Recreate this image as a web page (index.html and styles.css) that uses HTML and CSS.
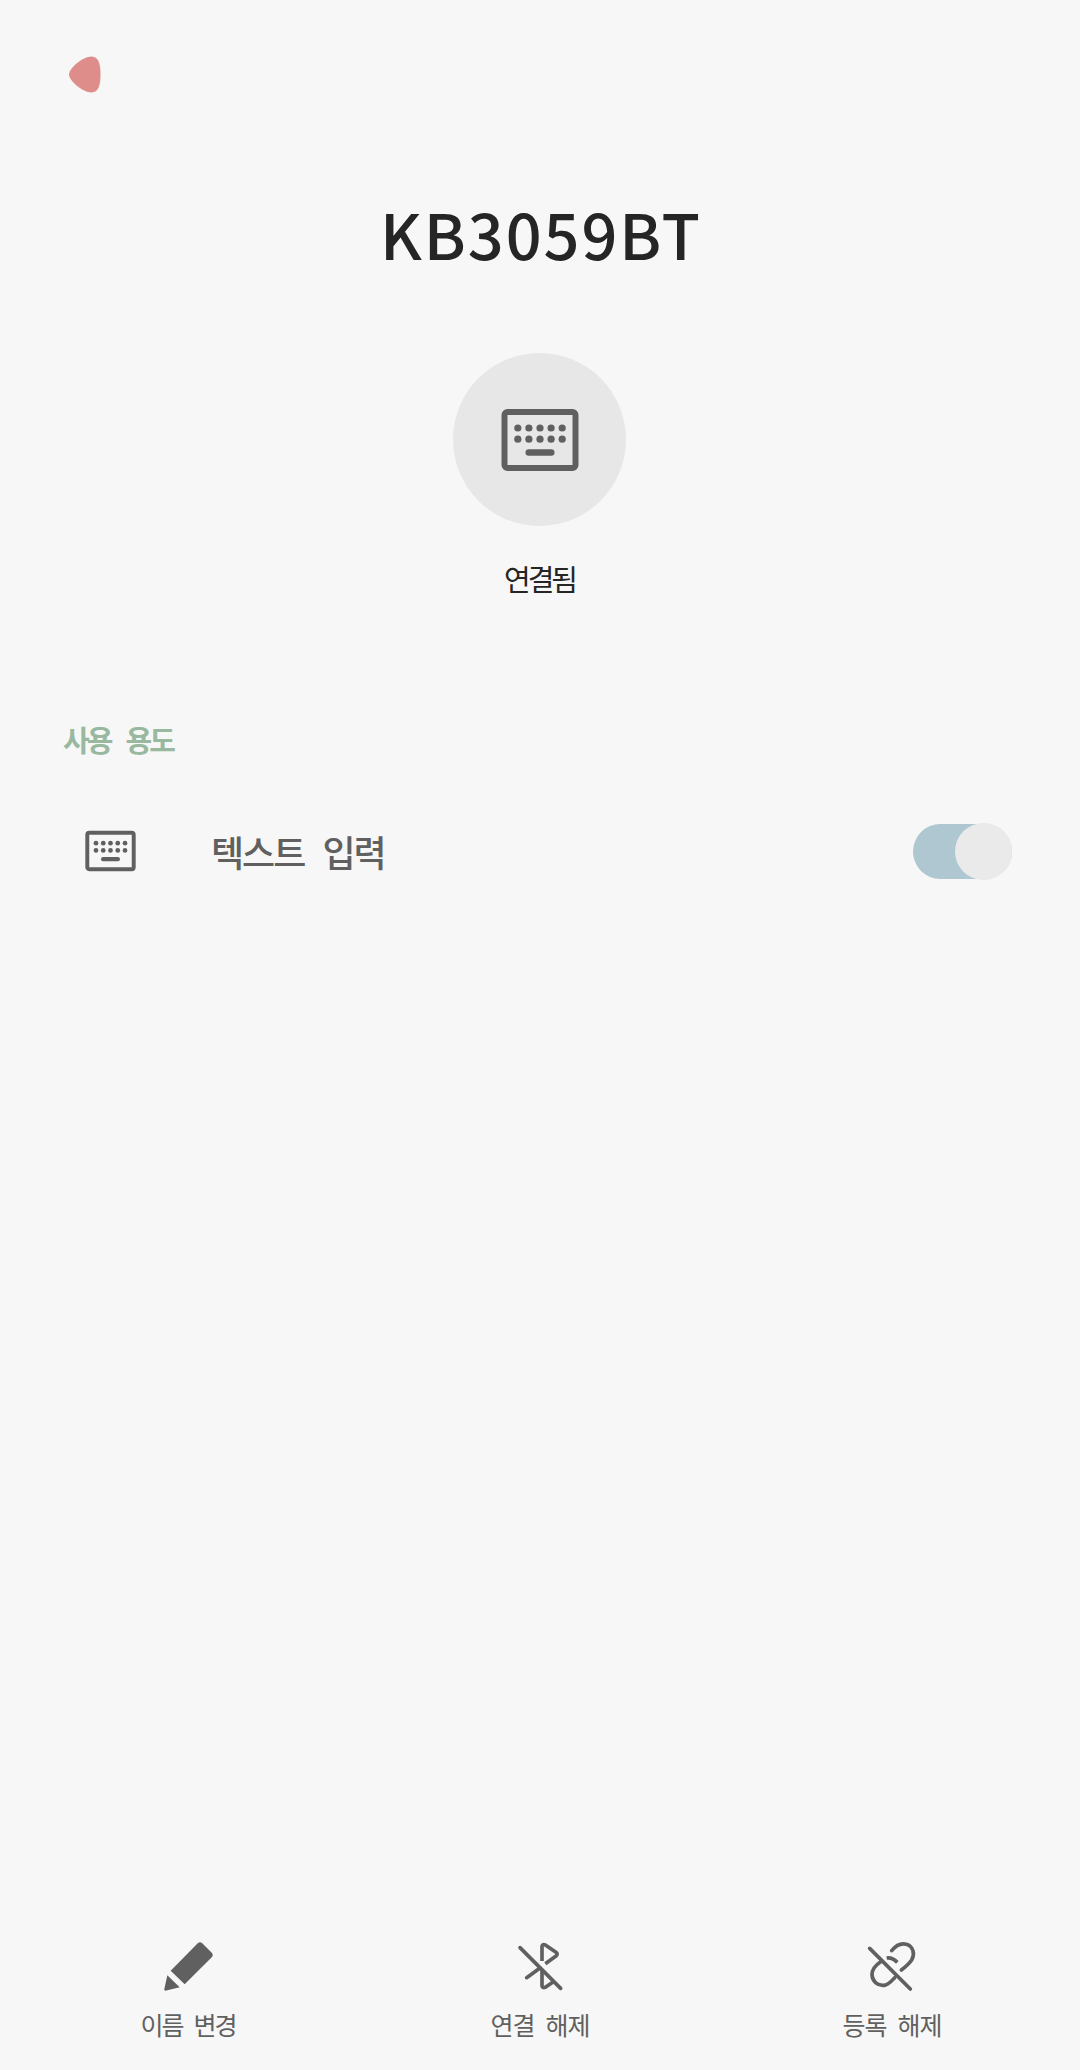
FILE: index.html
```
<!DOCTYPE html>
<html lang="ko">
    <head>
        <meta charset="UTF-8">
        <meta name="viewport" content="width=device-width, initial-scale=1.0">
        <title>KB3059BT</title>
        <link rel="stylesheet" href="styles.css">
    </head>

    <body>
        <!-- keyboard icon, used in the device circle and in the list -->
        <svg class="symbols">
            <symbol id="keyboard" viewBox="0 0 78 64">
                <rect x="3.5" y="4" width="71" height="56" rx="3" fill="none" stroke="currentColor" stroke-width="6"/>
                <g fill="currentColor">
                    <circle cx="16.8" cy="20" r="3.6"/>
                    <circle cx="27.9" cy="20" r="3.6"/>
                    <circle cx="39" cy="20" r="3.6"/>
                    <circle cx="50.1" cy="20" r="3.6"/>
                    <circle cx="61.2" cy="20" r="3.6"/>
                    <circle cx="16.8" cy="31.2" r="3.6"/>
                    <circle cx="27.9" cy="31.2" r="3.6"/>
                    <circle cx="39" cy="31.2" r="3.6"/>
                    <circle cx="50.1" cy="31.2" r="3.6"/>
                    <circle cx="61.2" cy="31.2" r="3.6"/>
                    <rect x="24.5" y="41.3" width="29" height="6.4" rx="3.2"/>
                </g>
            </symbol>
        </svg>

        <div id="container">
            <header>
                <button class="back" aria-label="뒤로">
                    <svg viewBox="0 0 32 37">
                        <path d="M0 18.5C0 12 14 0.5 22.5 0.5C30 0.5 31.5 9 31.5 18.5C31.5 28 30 36.5 22.5 36.5C14 36.5 0 25 0 18.5Z" fill="#df8d8a"/>
                    </svg>
                </button>
            </header>

            <div class="device">
                <h1>KB3059BT</h1>
                <div class="device-icon">
                    <svg><use href="#keyboard"/></svg>
                </div>
                <p class="status">연결됨</p>
            </div>

            <h2>사용 용도</h2>
            <div class="profile">
                <svg class="profile-icon"><use href="#keyboard"/></svg>
                <label for="input">텍스트 입력</label>
                <input type="checkbox" id="input" class="switch" checked>
            </div>

            <nav>
                <button class="rename">
                    <svg viewBox="84 30 180 180" fill="#606060">
                        <path d="M122 137L204 54Q210 49 216 54L246 84Q251 90 246 96L164 178Z"/>
                        <path d="M112 151L149 187L106 197Q102 197 103 192Z"/>
                    </svg>
                    <span>이름 변경</span>
                </button>
                <button class="disconnect">
                    <svg viewBox="90 30 180 180" fill="none" stroke="#606060" stroke-width="11" stroke-linecap="round" stroke-linejoin="round">
                        <path d="M120 68L242 190"/>
                        <path d="M140 158L180 129"/>
                        <path stroke-linecap="butt" d="M186 108V64Q187 56 196 60L228 82Q235 87 228 93L196 116"/>
                        <path d="M186 136V182Q187 190 196 187L216 173"/>
                    </svg>
                    <span>연결 해제</span>
                </button>
                <button class="unpair">
                    <svg viewBox="96 30 180 180" fill="none" stroke="#606060" stroke-width="11" stroke-linecap="round" stroke-linejoin="round">
                        <path d="M119 70L241 192"/>
                        <path d="M185 77C198 61 212 53 229 58C249 64 256 86 245 105C237 117 226 126 214 135"/>
                        <path d="M154 109C139 119 126 130 126 149C127 170 143 183 163 181C177 178 184 169 194 158"/>
                        <path stroke-linecap="butt" d="M170 99C182 97 193 103 202 112"/>
                    </svg>
                    <span>등록 해제</span>
                </button>
            </nav>
        </div>
    </body>
</html>
```
FILE: styles.css
```
* {
    box-sizing: border-box;
}
body {
    font-family: 'Noto Sans CJK KR', sans-serif;
    background-color: #f7f7f7;
    color: #252525;
    margin: 0;
}
h1, h2, p {
    margin: 0;
}
button {
    padding: 0;
    border: none;
    background: none;
    font-family: inherit;
    color: inherit;
    cursor: pointer;
}
svg {
    display: block;
}
.symbols {
    display: none;
}
#container {
    display: flex;
    flex-direction: column;
    height: 2070px;
}
header {
    height: 150px;
    padding: 56px 69px 0;
}
.back svg {
    width: 32px;
    height: 37px;
}
.device {
    display: flex;
    flex-direction: column;
    align-items: center;
    padding: 38px 1px 0 0;
}
h1 {
    height: 90px;
    line-height: 90px;
    font-size: 63px;
    font-weight: 500;
    letter-spacing: 2px;
    text-indent: 3px;
}
.device-icon {
    display: flex;
    justify-content: center;
    align-items: center;
    width: 173px;
    height: 173px;
    margin-top: 75px;
    border-radius: 50%;
    background-color: #e7e7e7;
    color: #606060;
}
.device-icon svg {
    width: 78px;
    height: 64px;
}
.status {
    height: 40px;
    margin-top: 32px;
    line-height: 40px;
    font-size: 29px;
    letter-spacing: -3px;
}
h2 {
    height: 40px;
    margin-top: 121px;
    padding-left: 63px;
    line-height: 40px;
    font-size: 29px;
    font-weight: 700;
    letter-spacing: -3px;
    word-spacing: 10px;
    color: #98b99f;
}
.profile {
    display: flex;
    align-items: center;
    height: 100px;
    margin-top: 42px;
    padding: 0 68px 0 85px;
    color: #606060;
}
.profile-icon {
    width: 51px;
    height: 42px;
}
.profile label {
    flex: 1;
    margin-left: 75px;
    font-size: 36px;
    font-weight: 500;
    letter-spacing: -2px;
    word-spacing: 10px;
}
.switch {
    appearance: none;
    display: flex;
    justify-content: flex-end;
    align-items: center;
    width: 99px;
    height: 55px;
    margin: 0;
    border-radius: 28px;
    background-color: #aec7d0;
}
.switch::before {
    content: "";
    flex: none;
    width: 57px;
    height: 57px;
    border-radius: 50%;
    background-color: #eaeaea;
}
nav {
    display: flex;
    margin-top: auto;
    padding: 0 12px 26px;
    color: #606060;
}
nav button {
    display: flex;
    flex: 1;
    flex-direction: column;
    align-items: center;
}
nav svg {
    width: 60px;
    height: 60px;
}
nav span {
    height: 40px;
    margin-top: 9px;
    line-height: 40px;
    font-size: 25px;
    letter-spacing: -1px;
    word-spacing: 5px;
}
nav .rename span {
    letter-spacing: -2px;
    word-spacing: 6px;
}
```
